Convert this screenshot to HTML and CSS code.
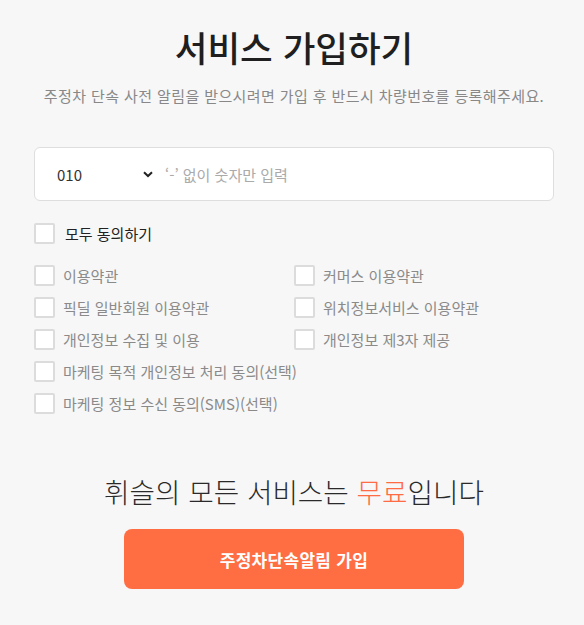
FILE: index.html
```html
<!DOCTYPE html>
<html lang="ko">
<head>
<meta charset="utf-8">
<link rel="stylesheet" href="styles.css">
</head>
<body>
<main class="page">
  <h1 class="title">서비스 가입하기</h1>
  <p class="subtitle">주정차 단속 사전 알림을 받으시려면 가입 후 반드시 차량번호를 등록해주세요.</p>

  <div class="phone">
    <div class="prefix">
      <span>010</span>
      <svg class="chev" width="10" height="7" viewBox="0 0 10 7"><path d="M1 1.2 L5 5 L9 1.2" fill="none" stroke="#222" stroke-width="2"/></svg>
    </div>
    <span class="placeholder">‘-’ 없이 숫자만 입력</span>
  </div>

  <label class="all"><span class="box"></span><span>모두 동의하기</span></label>

  <div class="terms">
    <label class="item"><span class="box"></span>이용약관</label>
    <label class="item"><span class="box"></span>커머스 이용약관</label>
    <label class="item"><span class="box"></span>픽딜 일반회원 이용약관</label>
    <label class="item"><span class="box"></span>위치정보서비스 이용약관</label>
    <label class="item"><span class="box"></span>개인정보 수집 및 이용</label>
    <label class="item"><span class="box"></span>개인정보 제3자 제공</label>
    <label class="item wide"><span class="box"></span>마케팅 목적 개인정보 처리 동의(선택)</label>
    <label class="item wide"><span class="box"></span>마케팅 정보 수신 동의(SMS)(선택)</label>
  </div>

  <p class="free">휘슬의 모든 서비스는 <em>무료</em>입니다</p>
  <button class="submit">주정차단속알림 가입</button>
</main>
</body>
</html>
```

FILE: styles.css
```css
html, body {
  margin: 0;
  padding: 0;
  background: #f7f7f7;
}
body {
  font-family: "Noto Sans CJK KR", "Noto Sans", sans-serif;
  color: #222;
}
.page {
  width: 520px;
  margin-left: 34px;
  padding-top: 23px;
  display: flex;
  flex-direction: column;
}
.title {
  margin: 0;
  text-align: center;
  font-size: 35.5px;
  font-weight: 500;
  line-height: 48px;
  color: #1f1f1f;
}
.subtitle {
  margin: 15px 0 0;
  text-align: center;
  font-size: 15px;
  line-height: 20px;
  color: #888;
  letter-spacing: 0.4px;
}
.phone {
  margin-top: 41px;
  height: 52px;
  background: #fff;
  border: 1px solid #dedede;
  border-radius: 6px;
  display: flex;
  align-items: center;
  font-size: 15px;
}
.prefix {
  width: 96px;
  padding-left: 22px;
  display: flex;
  align-items: center;
  justify-content: space-between;
  color: #333;
}
.chev { margin-top: 1px; }
.placeholder {
  margin-left: 12px;
  color: #aaa;
}
.box {
  width: 17px;
  height: 17px;
  border: 2px solid #dcdcdc;
  border-radius: 2px;
  background: #fff;
  flex: none;
}
.all {
  margin-top: 21px;
  display: flex;
  align-items: center;
  gap: 10px;
  font-size: 15px;
  color: #222;
  height: 22px;
}
.terms {
  margin-top: 21px;
  display: grid;
  grid-template-columns: 260px 260px;
  row-gap: 11px;
}
.item {
  display: flex;
  align-items: center;
  gap: 8px;
  height: 21px;
  font-size: 15px;
  color: #8a8a8a;
  white-space: nowrap;
}
.item.wide { grid-column: 1 / span 2; }
.free {
  margin: 58px 0 0;
  text-align: center;
  font-size: 27.7px;
  font-weight: 300;
  line-height: 38px;
  color: #2a2a2a;
}
.free em {
  font-style: normal;
  color: #ff6b44;
}
.submit {
  margin: 19px auto 0;
  width: 340px;
  height: 60px;
  border: none;
  border-radius: 8px;
  background: #ff6e43;
  color: #fff;
  font-family: inherit;
  font-size: 17px;
  font-weight: 700;
  letter-spacing: 0.3px;
}
```
